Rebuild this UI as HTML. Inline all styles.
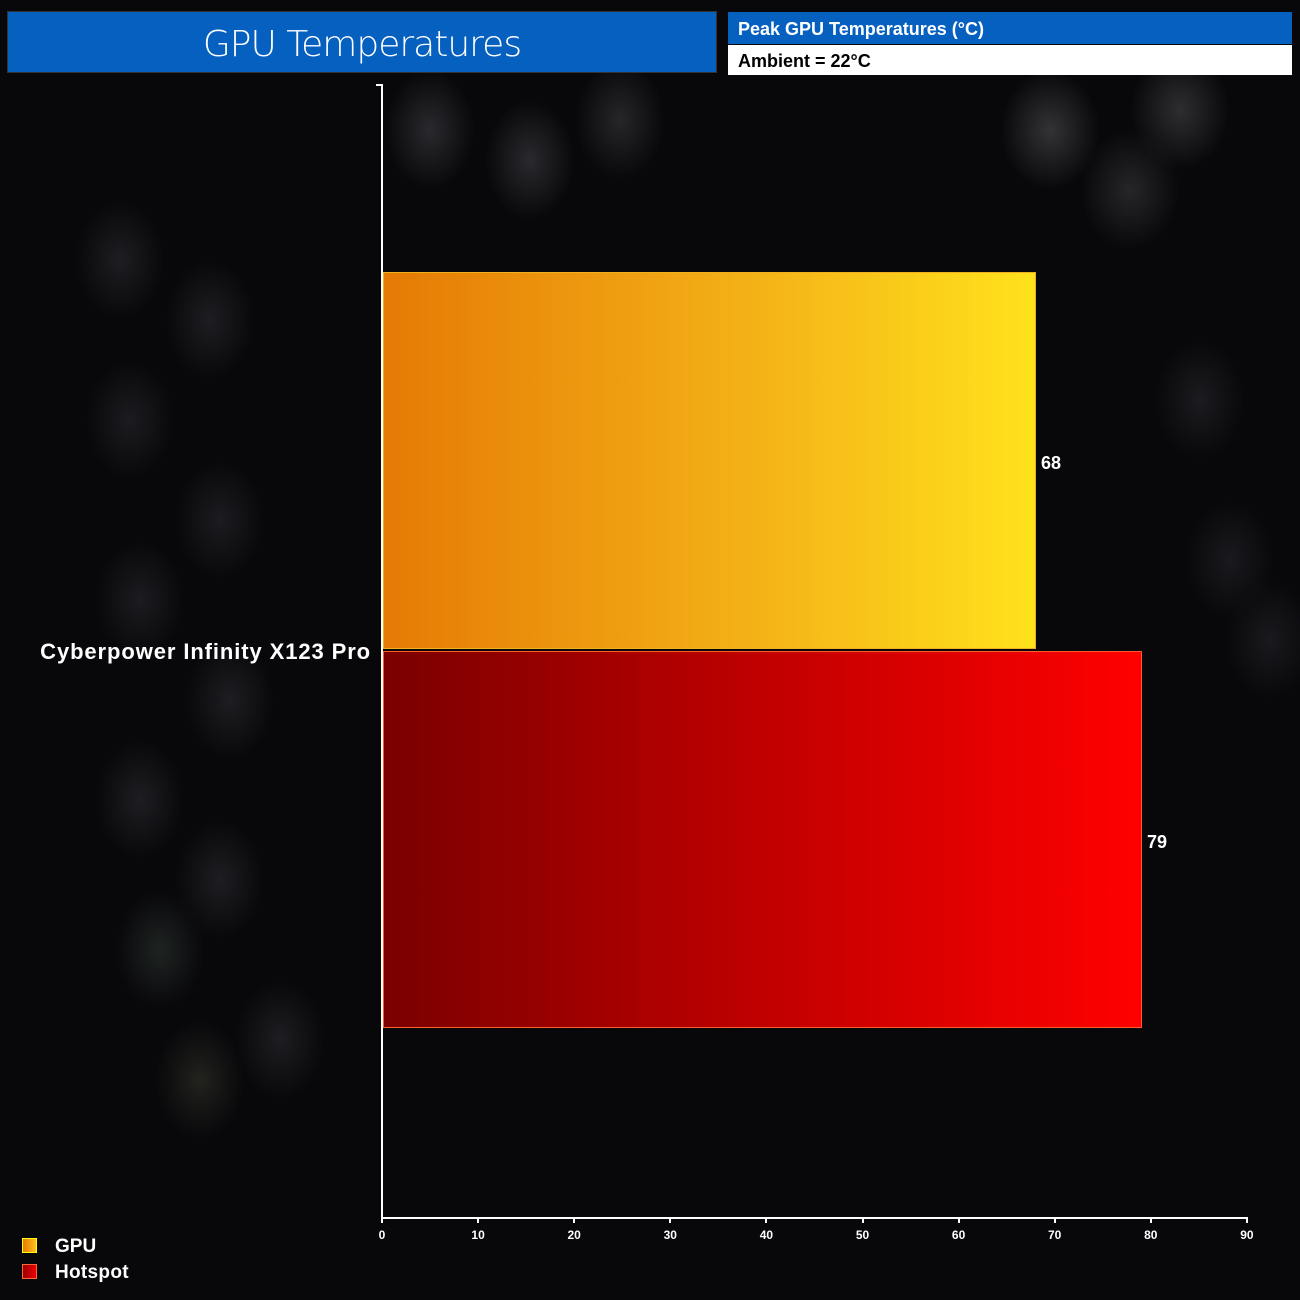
<!DOCTYPE html>
<html><head><style>
body{margin:0;width:1300px;height:1300px;background:#08070a;position:relative;overflow:hidden;font-family:"Liberation Sans",sans-serif;}
.bg{position:absolute;inset:0;background:
radial-gradient(ellipse 45px 60px at 430px 130px,#2a2a2e,transparent),
radial-gradient(ellipse 45px 60px at 530px 160px,#2a2a2e,transparent),
radial-gradient(ellipse 45px 60px at 620px 120px,#262628,transparent),
radial-gradient(ellipse 50px 60px at 1050px 130px,#333336,transparent),
radial-gradient(ellipse 50px 60px at 1180px 110px,#2e2e30,transparent),
radial-gradient(ellipse 50px 60px at 1130px 190px,#262628,transparent),
radial-gradient(ellipse 45px 60px at 120px 260px,#1e1e22,transparent),
radial-gradient(ellipse 45px 60px at 210px 320px,#1e1e22,transparent),
radial-gradient(ellipse 45px 60px at 130px 420px,#1c1c20,transparent),
radial-gradient(ellipse 45px 60px at 220px 520px,#1c1c20,transparent),
radial-gradient(ellipse 45px 60px at 140px 600px,#1c1c20,transparent),
radial-gradient(ellipse 45px 60px at 230px 700px,#1e1e22,transparent),
radial-gradient(ellipse 45px 60px at 140px 800px,#1e1e22,transparent),
radial-gradient(ellipse 45px 60px at 220px 880px,#1e1e22,transparent),
radial-gradient(ellipse 45px 60px at 160px 950px,#1f2422,transparent),
radial-gradient(ellipse 45px 60px at 280px 1040px,#1e1e22,transparent),
radial-gradient(ellipse 45px 60px at 200px 1080px,#22221e,transparent),
radial-gradient(ellipse 45px 60px at 1200px 400px,#1c1c20,transparent),
radial-gradient(ellipse 45px 60px at 1230px 560px,#1a1a1e,transparent),
radial-gradient(ellipse 45px 60px at 1270px 640px,#1a1a1e,transparent);}
.abs{position:absolute}
</style></head><body>
<div class="bg"></div>
<div class="abs" style="left:7px;top:11px;width:710px;height:62px;background:#0560c0;border:1px solid #333;box-sizing:border-box;color:#fff;font-size:36px;text-align:center;line-height:66px;font-family:'DejaVu Sans',sans-serif;font-weight:300;letter-spacing:-1px">GPU Temperatures</div>
<div class="abs" style="left:728px;top:12px;width:564px;height:32px;background:#0560c0;color:#fff;font-weight:bold;font-size:18px;line-height:34px;padding-left:10px;box-sizing:border-box">Peak GPU Temperatures (°C)</div>
<div class="abs" style="left:728px;top:45px;width:564px;height:30px;background:#fff;color:#000;font-weight:bold;font-size:18px;line-height:32px;padding-left:10px;box-sizing:border-box">Ambient = 22°C</div>
<div class="abs" style="left:381px;top:84px;width:2px;height:1135px;background:#fff"></div>
<div class="abs" style="left:376px;top:84px;width:6px;height:2px;background:#fff"></div>
<div class="abs" style="left:381px;top:1217px;width:867px;height:2px;background:#fff"></div>
<div class="abs" style="left:383px;top:272px;width:653px;height:377px;box-sizing:border-box;border:1px solid #f0b020;background:linear-gradient(90deg,#e57a05,#f5b518 60%,#ffe21c)"></div>
<div class="abs" style="left:383px;top:651px;width:759px;height:377px;box-sizing:border-box;border:1px solid #ff5a2a;background:linear-gradient(90deg,#7a0000,#c00000 50%,#ff0000)"></div>
<div class="abs" style="left:1041px;top:453px;color:#fff;font-weight:bold;font-size:18px">68</div>
<div class="abs" style="left:1147px;top:832px;color:#fff;font-weight:bold;font-size:18px">79</div>
<div class="abs" style="left:0;width:371px;top:639px;text-align:right;color:#fff;font-weight:bold;font-size:22px;letter-spacing:0.9px">Cyberpower Infinity X123 Pro</div>
<div id="ticks"></div>
<div class="abs" style="left:22px;top:1238px;width:15px;height:15px;box-sizing:border-box;border:1px solid #ff0;background:linear-gradient(90deg,#e57a05,#ffc020)"></div>
<div class="abs" style="left:22px;top:1264px;width:15px;height:15px;box-sizing:border-box;border:1px solid #f63;background:linear-gradient(90deg,#900,#e00)"></div>
<div class="abs" style="left:55px;top:1236px;color:#fff;font-weight:bold;font-size:19px">GPU</div>
<div class="abs" style="left:55px;top:1262px;color:#fff;font-weight:bold;font-size:19px;letter-spacing:0.3px">Hotspot</div>
<script>
var t='';for(var i=0;i<=9;i++){var x=382+i*96.1;t+='<div class="abs" style="left:'+(x-1)+'px;top:1218px;width:2px;height:5px;background:#fff"></div><div class="abs" style="left:'+(x-20)+'px;width:40px;text-align:center;top:1228px;color:#fff;font-weight:bold;font-size:12px">'+(i*10)+'</div>';}
document.getElementById('ticks').innerHTML=t;
</script>
</body></html>
